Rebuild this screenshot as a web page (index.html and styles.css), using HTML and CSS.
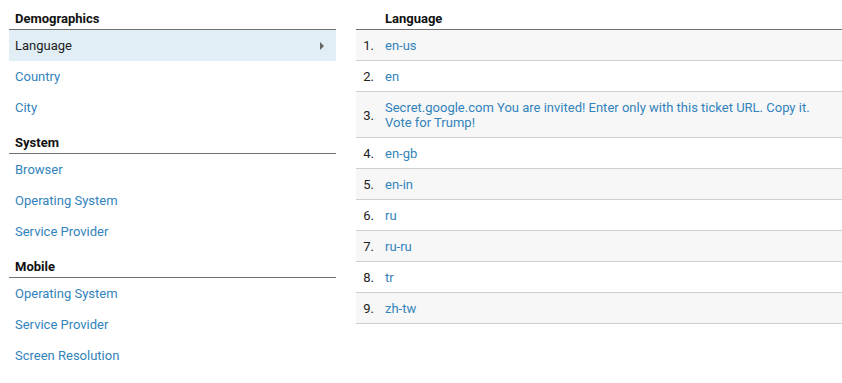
FILE: index.html
```html
<!DOCTYPE html>
<html lang="en">
<head>
    <meta charset="UTF-8" />
    <title>Language</title>
    <link rel="stylesheet" href="styles.css">
</head>
<body>
<div class="page">
    <div class="menu">
        <div class="group-title">Demographics</div>
        <a class="item active" href="#">Language<span class="arrow"></span></a>
        <a class="item" href="#">Country</a>
        <a class="item" href="#">City</a>

        <div class="group-title">System</div>
        <a class="item" href="#">Browser</a>
        <a class="item" href="#">Operating System</a>
        <a class="item" href="#">Service Provider</a>

        <div class="group-title">Mobile</div>
        <a class="item" href="#">Operating System</a>
        <a class="item" href="#">Service Provider</a>
        <a class="item" href="#">Screen Resolution</a>
    </div>

    <div class="table">
        <div class="table-head"><span class="num"></span><span class="cell">Language</span></div>
        <div class="row"><span class="num">1.</span><a class="cell" href="#">en-us</a></div>
        <div class="row"><span class="num">2.</span><a class="cell" href="#">en</a></div>
        <div class="row"><span class="num">3.</span><a class="cell" href="#">Secret.google.com You are invited! Enter only with this ticket URL. Copy it. Vote for Trump!</a></div>
        <div class="row"><span class="num">4.</span><a class="cell" href="#">en-gb</a></div>
        <div class="row"><span class="num">5.</span><a class="cell" href="#">en-in</a></div>
        <div class="row"><span class="num">6.</span><a class="cell" href="#">ru</a></div>
        <div class="row"><span class="num">7.</span><a class="cell" href="#">ru-ru</a></div>
        <div class="row"><span class="num">8.</span><a class="cell" href="#">tr</a></div>
        <div class="row"><span class="num">9.</span><a class="cell" href="#">zh-tw</a></div>
    </div>
</div>
</body>
</html>
```

FILE: styles.css
```css
body {
    margin: 0;
    font-family: Roboto, "Liberation Sans", Arial, sans-serif;
    font-size: 13px;
    color: #222;
    background: #fff;
}

a {
    text-decoration: none;
    color: #3283bc;
}

.page {
    display: flex;
    gap: 20px;
    padding-left: 9px;
}

.menu {
    width: 327px;
    flex-shrink: 0;
}

.group-title,
.table-head {
    font-weight: bold;
    color: #111;
    line-height: 16px;
    padding: 11px 0 2px 6px;
    border-bottom: 1px solid #707070;
}

.item + .group-title {
    margin-top: 1px;
}

.item {
    display: flex;
    align-items: center;
    justify-content: space-between;
    height: 31px;
    padding: 0 12px 0 6px;
}

.item.active {
    background: #e1eef5;
    color: #222;
}

.arrow {
    width: 0;
    height: 0;
    border-top: 4px solid transparent;
    border-bottom: 4px solid transparent;
    border-left: 4px solid #666;
}

.table {
    flex: 1;
}

.table-head {
    display: flex;
    padding-left: 0;
}

.row {
    display: flex;
    align-items: center;
    line-height: 15px;
    padding: 8px 10px 7px 0;
    border-bottom: 1px solid #cfcfcf;
}

.row:nth-child(even) {
    background: #f7f7f7;
}

.num {
    width: 18px;
    flex-shrink: 0;
    text-align: right;
    padding-right: 11px;
    color: #222;
}

.cell {
    flex: 1;
}
```
